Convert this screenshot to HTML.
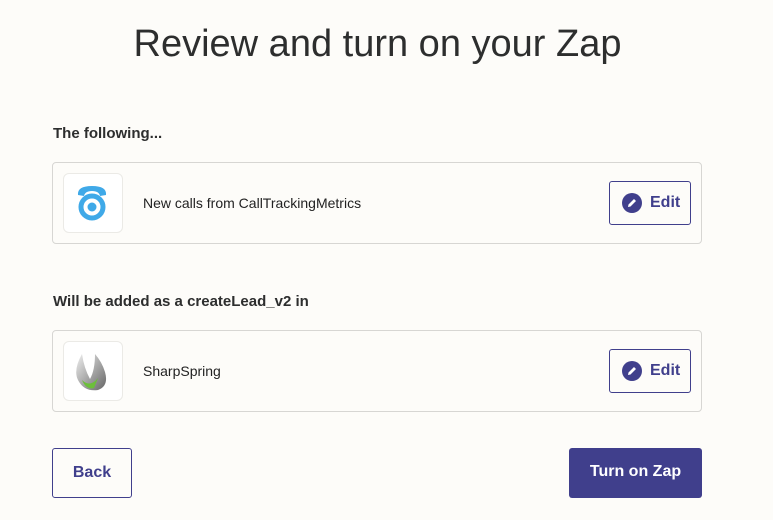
<!DOCTYPE html>
<html><head><style>
body{margin:0;width:773px;height:520px;background:#fdfcf9;font-family:"Liberation Sans",sans-serif;position:relative;overflow:hidden;color:#2d2e2e}
h1{position:absolute;top:23px;left:0;width:755px;text-align:center;font-weight:400;font-size:38px;margin:0;color:#2d2e2e}
.lbl{position:absolute;left:53px;font-weight:700;font-size:15px}
.card{position:absolute;left:52px;width:650px;height:82px;border:1px solid #d7d6d3;border-radius:4px;box-sizing:border-box}
.ic{position:absolute;left:10px;top:10px;width:60px;height:60px;border:1px solid #ebeae6;border-radius:6px;box-sizing:border-box;background:#fff}
.t{position:absolute;left:90px;top:32px;font-size:14px;color:#222}
.ed{position:absolute;right:10px;top:18px;width:82px;height:44px;border:1px solid #403f8c;border-radius:3px;box-sizing:border-box;color:#403f8c;font-weight:700;font-size:16px}
.ed svg{position:absolute;left:12px;top:11px}
.ed span{position:absolute;left:40px;top:12px}
.btn{position:absolute;top:448px;height:50px;box-sizing:border-box;border-radius:3px;font-weight:700;font-size:16px;text-align:center;line-height:48px}
</style></head><body>
<h1>Review and turn on your Zap</h1>
<div class="lbl" style="top:125px">The following...</div>
<div class="card" style="top:162px">
 <div class="ic"><svg width="58" height="58" viewBox="0 0 58 58"><path d="M14 21 Q13 12 28 12 Q43 12 42 21 L36 22 Q35 17 28 17 Q21 17 20 22Z" fill="#3fa9e8"/><circle cx="28" cy="33" r="11" fill="none" stroke="#3fa9e8" stroke-width="5"/><circle cx="28" cy="33" r="4.5" fill="#3fa9e8"/></svg></div>
 <div class="t">New calls from CallTrackingMetrics</div>
 <div class="ed"><svg width="20" height="20" viewBox="0 0 20 20"><circle cx="10" cy="10" r="10" fill="#403f8c"/><path d="M6 14 L6.5 11.5 L12 6 L14 8 L8.5 13.5Z" fill="#fff"/></svg><span>Edit</span></div>
</div>
<div class="lbl" style="top:293px">Will be added as a createLead_v2 in</div>
<div class="card" style="top:330px">
 <div class="ic"><svg width="58" height="58" viewBox="0 0 58 58"><defs><linearGradient id="g" x1="0" y1="0" x2="1" y2="1"><stop offset="0" stop-color="#eee"/><stop offset="1" stop-color="#666"/></linearGradient></defs><path d="M18 12 Q9 28 14 38 Q20 50 34 48 Q45 44 41 30 Q38 20 31 12 Q31 28 26 37 Q20 26 18 12Z" fill="url(#g)"/><path d="M18 38 Q26 46 34 36 L30 46 Q22 48 18 38Z" fill="#6cbf3a"/></svg></div>
 <div class="t">SharpSpring</div>
 <div class="ed"><svg width="20" height="20" viewBox="0 0 20 20"><circle cx="10" cy="10" r="10" fill="#403f8c"/><path d="M6 14 L6.5 11.5 L12 6 L14 8 L8.5 13.5Z" fill="#fff"/></svg><span>Edit</span></div>
</div>
<div class="btn" style="left:52px;width:80px;border:1px solid #403f8c;color:#403f8c">Back</div>
<div class="btn" style="left:569px;width:133px;background:#403f8c;color:#fff">Turn on Zap</div>
</body></html>
